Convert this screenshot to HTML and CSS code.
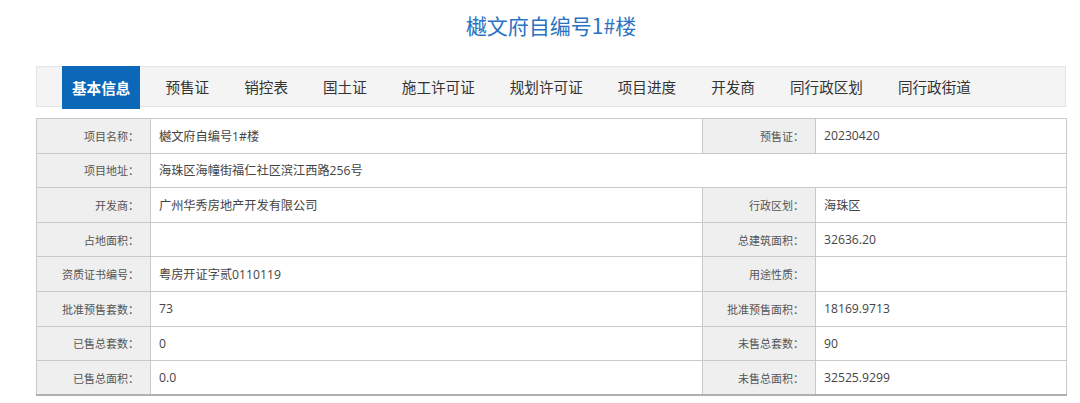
FILE: index.html
```html
<!DOCTYPE html>
<html lang="zh-CN">
<head>
<meta charset="utf-8">
<title>樾文府自编号1#楼</title>
<link rel="stylesheet" href="styles.css">
</head>
<body>
<div class="page">
  <h1 class="title">樾文府自编号1#楼</h1>
  <nav class="tabs">
    <a class="tab active">基本信息</a>
    <a class="tab">预售证</a>
    <a class="tab">销控表</a>
    <a class="tab">国土证</a>
    <a class="tab">施工许可证</a>
    <a class="tab">规划许可证</a>
    <a class="tab">项目进度</a>
    <a class="tab">开发商</a>
    <a class="tab">同行政区划</a>
    <a class="tab">同行政街道</a>
  </nav>
  <table class="info">
    <colgroup>
      <col class="c-l1"><col class="c-v1"><col class="c-l2"><col class="c-v2">
    </colgroup>
    <tr><th>项目名称：</th><td>樾文府自编号1#楼</td><th>预售证：</th><td>20230420</td></tr>
    <tr><th>项目地址：</th><td colspan="3">海珠区海幢街福仁社区滨江西路256号</td></tr>
    <tr><th>开发商：</th><td>广州华秀房地产开发有限公司</td><th>行政区划：</th><td>海珠区</td></tr>
    <tr><th>占地面积：</th><td></td><th>总建筑面积：</th><td>32636.20</td></tr>
    <tr><th>资质证书编号：</th><td>粤房开证字贰0110119</td><th>用途性质：</th><td></td></tr>
    <tr><th>批准预售套数：</th><td>73</td><th>批准预售面积：</th><td>18169.9713</td></tr>
    <tr><th>已售总套数：</th><td>0</td><th>未售总套数：</th><td>90</td></tr>
    <tr><th>已售总面积：</th><td>0.0</td><th>未售总面积：</th><td>32525.9299</td></tr>
  </table>
</div>
</body>
</html>
```
FILE: styles.css
```css
html, body {
  margin: 0;
  padding: 0;
  background: #ffffff;
}
body {
  font-family: "Noto Sans CJK SC", "Noto Sans", sans-serif;
  color: #333333;
}
.page {
  width: 1030px;
  padding-left: 36px;
}
.title {
  margin: 0;
  height: 66px;
  padding-top: 10px;
  box-sizing: border-box;
  text-align: center;
  font-size: 21px;
  line-height: 30px;
  font-weight: normal;
  color: #2b73c2;
}
.tabs {
  display: flex;
  gap: 15px;
  height: 41px;
  box-sizing: border-box;
  padding-left: 25px;
  background: #f4f4f4;
  border: 1px solid #e4e4e4;
  margin-bottom: 11px;
}
.tab {
  display: flex;
  align-items: center;
  padding: 0 10px;
  margin-top: -1px;
  height: 41px;
  font-size: 14.6px;
  color: #333333;
  white-space: nowrap;
}
.tab.active {
  height: 43px;
  background: #0b67b8;
  color: #ffffff;
  font-weight: bold;
}
.info {
  width: 1030px;
  border-collapse: collapse;
  table-layout: fixed;
  border: 1px solid #b9b9b9;
  border-bottom: 2px solid #b0b0b0;
}
.c-l1 { width: 114px; }
.c-v1 { width: 552px; }
.c-l2 { width: 113px; }
.c-v2 { width: 251px; }
.info th,
.info td {
  height: 34.6px;
  padding: 0;
  border: 1px solid #c9c9c9;
  box-sizing: border-box;
  vertical-align: middle;
  white-space: nowrap;
}
.info th {
  background: #efefef;
  text-align: right;
  font-weight: normal;
  font-size: 11px;
  color: #555555;
  padding-right: 11px;
}
.info td {
  background: #ffffff;
  text-align: left;
  font-size: 12.2px;
  color: #444444;
  padding-left: 8px;
  font-family: "Open Sans", "Noto Sans CJK SC", sans-serif;
}
```
